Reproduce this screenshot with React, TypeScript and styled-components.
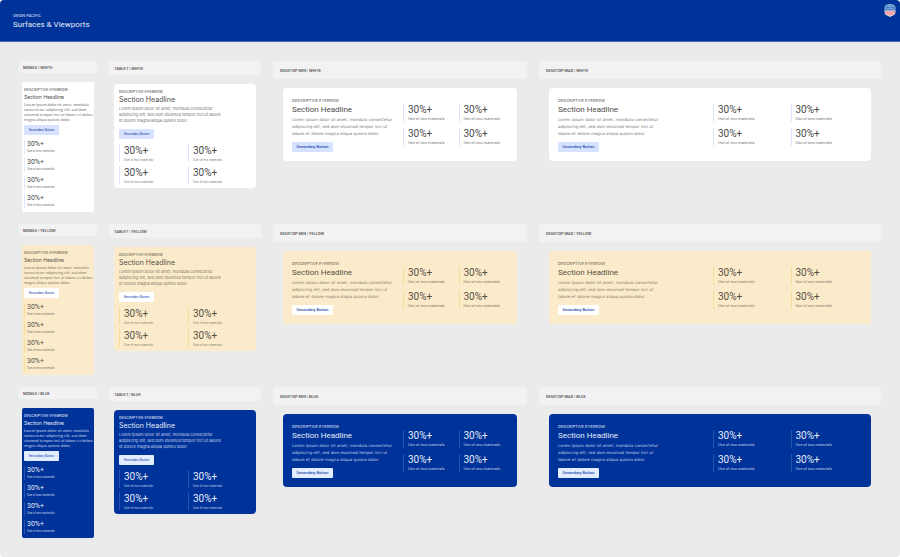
import styled, { createGlobalStyle } from "styled-components";

type Size = "mobile" | "tablet" | "min" | "max";
type Tone = "white" | "yellow" | "blue";

const GlobalStyle = createGlobalStyle`
  * {
    box-sizing: border-box;
  }

  body {
    margin: 0;
    background: #fff;
    font-family: Roboto, "Liberation Sans", sans-serif;
  }

  h1, h2, h3, p, dl, dd, dt {
    margin: 0;
    font-weight: 400;
  }
`;

const tones = {
  white: {
    bg: "#ffffff",
    title: "#4a4a4a",
    text: "#77777a",
    line: "#dfe8fb",
    button: "#d6e2ff",
    buttonText: "#1f4bab",
  },
  yellow: {
    bg: "#fbebcb",
    title: "#575043",
    text: "#857b68",
    line: "#f7dc9a",
    button: "#ffffff",
    buttonText: "#1f4bab",
  },
  blue: {
    bg: "#003399",
    title: "#e6ecf8",
    text: "#c3d0ea",
    line: "#2653ae",
    button: "#e4ecff",
    buttonText: "#1f4bab",
  },
};

const sizes = {
  mobile: {
    labelHeight: 12,
    labelPad: 4,
    inset: 3,
    pad: "5px 2px 4px",
    radius: 2,
    eyebrowFont: "Roboto",
    title: 5,
    titleLine: 10,
    titleFont: "Inter",
    text: 4,
    textLine: 5,
    textFont: "Lato",
    number: 7,
    numberLine: 9,
    caption: 3,
    captionLine: 5,
    captionFont: "Roboto",
    statPad: 2,
    statGap: 4,
    buttonWidth: 35,
    buttonText: 3,
    buttonTop: 3,
  },
  tablet: {
    labelHeight: 14,
    labelPad: 5,
    inset: 5,
    pad: "5px 5px 4px",
    radius: 4,
    eyebrowFont: "Roboto",
    title: 7,
    titleLine: 12,
    titleFont: "Inter",
    text: 4,
    textLine: 6,
    textFont: "Inter",
    number: 10,
    numberLine: 14,
    caption: 3,
    captionLine: 4,
    captionFont: "Inter",
    statPad: 4,
    statGap: 4,
    buttonWidth: 35,
    buttonText: 3,
    buttonTop: 5,
  },
  min: {
    labelHeight: 18,
    labelPad: 7,
    inset: 10,
    pad: "10px 9px 9px",
    radius: 4,
    eyebrowFont: "Inter",
    title: 8,
    titleLine: 13,
    titleFont: "Roboto",
    text: 4,
    textLine: 7,
    textFont: "DejaVu Sans",
    number: 10,
    numberLine: 12,
    caption: 4,
    captionLine: 6,
    captionFont: "Roboto",
    statPad: 4,
    statGap: 6,
    buttonWidth: 41,
    buttonText: 4,
    buttonTop: 5,
  },
};

const getSize = (size: Size) => (size === "max" ? sizes.min : sizes[size]);

const Page = styled.div`
  min-height: 100vh;
  background: #ebebeb;
  border-radius: 4px;
  overflow: hidden;
`;

const Header = styled.header`
  display: flex;
  justify-content: space-between;
  align-items: flex-start;
  height: 42px;
  padding: 4px 4px 0 13px;
  background: #003399;
  border-bottom: 1px solid #4468b3;
  color: #fff;

  p {
    margin-top: 9px;
    font-size: 4px;
    font-weight: 500;
    line-height: 5px;
    color: #c3d0ea;
  }

  h1 {
    margin-top: 1px;
    font-size: 8px;
    line-height: 12px;
    color: #e6ecf8;
  }

  svg {
    display: block;
    width: 12px;
    height: 13px;
  }
`;

const Board = styled.main`
  display: grid;
  grid-template-columns: 78fr 152fr 254fr 342fr;
  gap: 12px;
  align-items: start;
  padding: 19px;
`;

const Label = styled.h2<{ $size: Size }>`
  display: flex;
  align-items: center;
  height: ${({ $size }) => getSize($size).labelHeight}px;
  padding-left: ${({ $size }) => getSize($size).labelPad}px;
  margin-bottom: 9px;
  border-radius: 2px;
  background: #f2f2f2;
  color: #4a4a4a;
  font-size: 4px;
  font-weight: 500;
`;

const Card = styled.article<{ $size: Size; $tone: Tone }>`
  display: grid;
  grid-template-columns: ${({ $size }) =>
    $size === "min" || $size === "max" ? "1fr 1fr" : "1fr"};
  column-gap: 6px;
  row-gap: 5px;
  margin: 0 ${({ $size }) => getSize($size).inset}px;
  padding: ${({ $size }) => getSize($size).pad};
  border-radius: ${({ $size, $tone }) =>
    $tone === "yellow" ? 2 : getSize($size).radius}px;
  background: ${({ $tone }) => tones[$tone].bg};
`;

const Copy = styled.div<{ $size: Size; $tone: Tone }>`
  min-width: 0;
  white-space: nowrap;
  color: ${({ $tone }) => tones[$tone].text};

  .eyebrow {
    font-family: ${({ $size }) => getSize($size).eyebrowFont}, sans-serif;
    font-size: 4px;
    font-weight: 500;
    line-height: 5px;
  }

  h3 {
    font-family: ${({ $size }) => getSize($size).titleFont}, sans-serif;
    font-size: ${({ $size }) => getSize($size).title}px;
    line-height: ${({ $size }) => getSize($size).titleLine}px;
    color: ${({ $tone }) => tones[$tone].title};
  }

  .body {
    font-family: ${({ $size }) => getSize($size).textFont}, sans-serif;
    font-size: ${({ $size }) => getSize($size).text}px;
    line-height: ${({ $size }) => getSize($size).textLine}px;
  }
`;

const Button = styled.button<{ $size: Size; $tone: Tone }>`
  display: block;
  width: ${({ $size }) => getSize($size).buttonWidth}px;
  height: 10px;
  margin-top: ${({ $size }) => getSize($size).buttonTop}px;
  padding: 0;
  border: 0;
  border-radius: 1px;
  background: ${({ $tone }) => tones[$tone].button};
  color: ${({ $tone }) => tones[$tone].buttonText};
  font-family: ${({ $size }) =>
    getSize($size).buttonText === 3 ? "Inter" : "Roboto"}, sans-serif;
  font-size: ${({ $size }) => getSize($size).buttonText}px;
  font-weight: 500;
  line-height: 10px;
  cursor: pointer;
`;

const Stats = styled.dl<{ $size: Size }>`
  display: grid;
  grid-template-columns: ${({ $size }) =>
    $size === "mobile" ? "1fr" : "1fr 1fr"};
  gap: ${({ $size }) => getSize($size).statGap}px 6px;
  align-content: start;
  padding-top: ${({ $size }) =>
    $size === "min" || $size === "max" ? 6 : 0}px;
`;

const Stat = styled.div<{ $size: Size; $tone: Tone }>`
  display: flex;
  flex-direction: column-reverse;
  padding-left: ${({ $size }) => getSize($size).statPad}px;
  border-left: 1px solid ${({ $tone }) => tones[$tone].line};
  white-space: nowrap;

  dd {
    font-size: ${({ $size }) => getSize($size).number}px;
    line-height: ${({ $size }) => getSize($size).numberLine}px;
    color: ${({ $tone }) => tones[$tone].title};
  }

  dt {
    font-family: ${({ $size }) => getSize($size).captionFont}, sans-serif;
    font-size: ${({ $size }) => getSize($size).caption}px;
    line-height: ${({ $size }) => getSize($size).captionLine}px;
    color: ${({ $tone }) => tones[$tone].text};
  }
`;

const desktopLines = [
  "Lorem ipsum dolor sit amet, mondula consectetur",
  "adipiscing elit, sed dom eiusmod tempor inci ut",
  "labore et dolore magna aliqua quisno dolor.",
];

const columns: { size: Size; name: string; lines: string[] }[] = [
  {
    size: "mobile",
    name: "MOBILE",
    lines: [
      "Lorem ipsum dolor sit amet, mondula",
      "consectetur adipiscing elit, sed dom",
      "eiusmod tempor inci ut labore et dolore",
      "magna aliqua quisno dolor.",
    ],
  },
  {
    size: "tablet",
    name: "TABLET",
    lines: [
      "Lorem ipsum dolor sit amet, mondula consectetur",
      "adipiscing elit, sed dom eiusmod tempor inci ut labore",
      "et dolore magna aliqua quisno dolor.",
    ],
  },
  { size: "min", name: "DESKTOP MIN", lines: desktopLines },
  { size: "max", name: "DESKTOP MAX", lines: desktopLines },
];

const rows: Tone[] = ["white", "yellow", "blue"];

const Logo = () => (
  <svg viewBox="0 0 24 26" role="img" aria-label="Union Pacific">
    <path
      d="M5 1 Q8 2 12 0 Q16 2 19 1 L23 6 Q22 9 23 13 Q24 20 18 23 Q14 24 12 26 Q10 24 6 23 Q0 20 1 13 Q2 9 1 6 Z"
      fill="#d9e2f2"
    />
    <path
      d="M6 2 Q9 3 12 2 Q15 3 18 2 L22 6 Q21 9 22 13 H2 Q3 9 2 6 Z"
      fill="#4a83c6"
    />
    <path d="M7 5 H17 M5 9 H19" stroke="#a9c8e8" strokeWidth="1" />
    <path
      d="M2 14 H22 Q23 20 18 22 Q14 23 12 25 Q10 23 6 22 Q1 20 2 14 Z"
      fill="#f7dfe3"
    />
    <path
      d="M4 14 V20 M8 14 V22 M12 14 V24 M16 14 V22 M20 14 V20"
      stroke="#ee6a70"
      strokeWidth="2"
    />
  </svg>
);

const Surface = ({
  size,
  tone,
  name,
  lines,
}: {
  size: Size;
  tone: Tone;
  name: string;
  lines: string[];
}) => (
  <section>
    <Label $size={size}>
      {name} | {tone.toUpperCase()}
    </Label>
    <Card $size={size} $tone={tone}>
      <Copy $size={size} $tone={tone}>
        <p className="eyebrow">DESCRIPTIVE EYEBROW</p>
        <h3>Section Headline</h3>
        <p className="body">
          {lines.map((line, index) => (
            <span key={line}>
              {index > 0 && <br />}
              {line}
            </span>
          ))}
        </p>
        <Button type="button" $size={size} $tone={tone}>
          Secondary Button
        </Button>
      </Copy>
      <Stats $size={size}>
        {[1, 2, 3, 4].map((item) => (
          <Stat key={item} $size={size} $tone={tone}>
            <dt>Use of eco materials</dt>
            <dd>30%+</dd>
          </Stat>
        ))}
      </Stats>
    </Card>
  </section>
);

const App = () => {
  return (
    <>
      <GlobalStyle />
      <Page>
        <Header>
          <div>
            <p>UNION PACIFIC</p>
            <h1>Surfaces &amp; Viewports</h1>
          </div>
          <Logo />
        </Header>
        <Board>
          {rows.map((tone) =>
            columns.map((column) => (
              <Surface key={tone + column.size} tone={tone} {...column} />
            ))
          )}
        </Board>
      </Page>
    </>
  );
};

export default App;
